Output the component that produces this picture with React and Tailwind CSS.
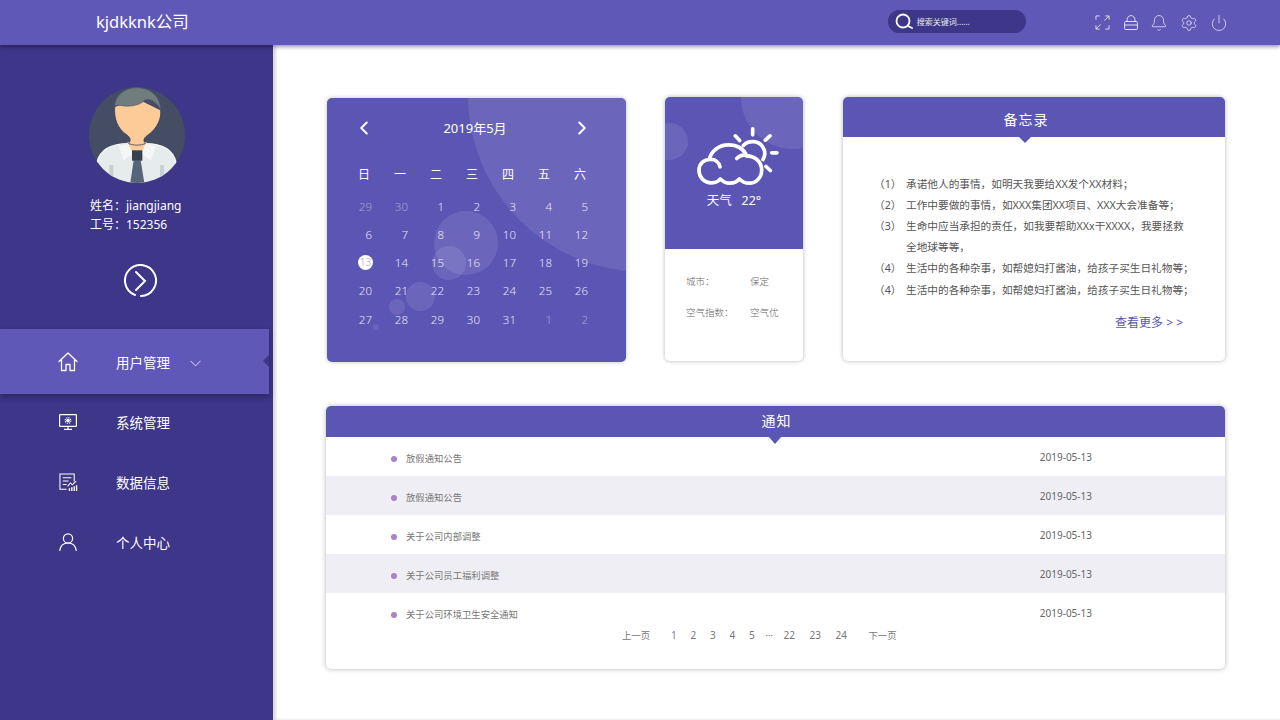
import { Bell, Settings, Power, ChevronDown, ChevronLeft, ChevronRight } from 'lucide-react'

const WEEK = ['日', '一', '二', '三', '四', '五', '六']
const DAYS = [
  29, 30, 1, 2, 3, 4, 5,
  6, 7, 8, 9, 10, 11, 12,
  13, 14, 15, 16, 17, 18, 19,
  20, 21, 22, 23, 24, 25, 26,
  27, 28, 29, 30, 31, 1, 2,
]
const MEMO = [
  ['\uFF081\uFF09', '承诺他人的事情\uFF0C如明天我要给XX发个XX材料\uFF1B'],
  ['\uFF082\uFF09', '工作中要做的事情\uFF0C如XXX集团XX项目\u3001XXX大会准备等\uFF1B'],
  ['\uFF083\uFF09', '生命中应当承担的责任\uFF0C如我要帮助XXx干XXXX\uFF0C我要拯救'],
  ['', '全地球等等\uFF0C'],
  ['\uFF084\uFF09', '生活中的各种杂事\uFF0C如帮媳妇打酱油\uFF0C给孩子买生日礼物等\uFF1B'],
  ['\uFF084\uFF09', '生活中的各种杂事\uFF0C如帮媳妇打酱油\uFF0C给孩子买生日礼物等\uFF1B'],
]
const NOTICES = ['放假通知公告', '放假通知公告', '关于公司内部调整', '关于公司员工福利调整', '关于公司环境卫生安全通知']

function Avatar() {
  return (
    <svg viewBox="11 6 288 288" className="w-24 h-24">
      <defs>
        <clipPath id="av"><circle cx="155" cy="150" r="144" /></clipPath>
      </defs>
      <circle cx="155" cy="150" r="144" fill="#444d63" />
      <g clipPath="url(#av)">
        <path d="M35 232 C45 190 85 176 130 176 L180 176 C225 176 262 190 272 232 L272 310 L35 310 Z" fill="#e6ebec" stroke="#f7f9f9" strokeWidth="4" />
        <path d="M125 172 L185 172 L170 198 L140 198 Z" fill="#fccb97" />
        <path d="M100 182 L130 178 L142 206 L115 226 Z" fill="#f5f7f7" />
        <path d="M212 182 L180 178 L170 206 L196 226 Z" fill="#f5f7f7" />
        <path d="M72 240 h12 v55 h-12 Z M224 240 h12 v55 h-12 Z" fill="#c8d2d4" />
        <path d="M145 226 L166 226 L178 300 L134 300 Z" fill="#566578" />
        <rect x="140" y="196" width="31" height="31" fill="#36404f" />
      </g>
      <path d="M88 65 C86 100 95 130 125 150 C135 158 138 165 130 176 C145 182 165 182 180 176 C172 165 176 158 188 150 C218 128 228 100 226 75 L155 40 Z" fill="#fccb97" stroke="#2c2f5e" strokeWidth="2" />
      <path d="M88 65 C88 30 120 8 155 8 C195 8 226 35 226 75 C215 52 195 38 178 45 C165 62 130 66 110 62 C100 60 92 60 88 65 Z" fill="#717d7c" stroke="#4a5570" strokeWidth="2" />
    </svg>
  )
}

function HomeIcon() {
  return (
    <svg viewBox="0 0 20 20" fill="none" stroke="white" strokeWidth="1.3" strokeLinejoin="round" strokeLinecap="round" className="w-5 h-5">
      <path d="M1 9.5 L10 1 L19 9.5 M3.5 7.5 V18.5 H8 V12.5 H12 V18.5 H16.5 V7.5" />
    </svg>
  )
}

function MonitorIcon() {
  return (
    <svg viewBox="0 0 18 16" fill="none" stroke="white" strokeWidth="1.2" className="w-[18px] h-4">
      <rect x="0.6" y="0.6" width="16.8" height="11.8" rx="0.5" />
      <path d="M9 12.5 v2.5 M5 15.4 h8" />
      <circle cx="9" cy="6.5" r="1.8" fill="white" stroke="none" />
      <circle cx="9" cy="6.5" r="2.8" strokeDasharray="1.2 1" />
    </svg>
  )
}

function ReportIcon() {
  return (
    <svg viewBox="0 0 20 20" fill="none" stroke="white" strokeWidth="1.1" className="w-[19px] h-[19px]">
      <path d="M16 9 V1 H1 V17 H8" />
      <path d="M4 5 H13 M4 8.5 H10 M4 12 H8" />
      <path d="M9 14 L12 10.5 L14 12.5 L18 8.5" />
      <path d="M11 19 v-3 M13.5 19 v-4 M16 19 v-5 M18.5 19 v-6" strokeWidth="1.4" />
    </svg>
  )
}

function UserIcon() {
  return (
    <svg viewBox="0 0 18 18" fill="none" stroke="white" strokeWidth="1.2" strokeLinecap="round" className="w-[18px] h-[18px]">
      <circle cx="9" cy="5.4" r="4.6" />
      <path d="M0.8 17.4 C1.4 12.8 4.6 10 9 10 C13.4 10 16.6 12.8 17.2 17.4" />
    </svg>
  )
}

function ExpandIcon() {
  return (
    <svg viewBox="0 0 16 16" fill="none" stroke="currentColor" strokeWidth="1" className="w-[15px] h-[15px]">
      <path d="M1 5 V1 H5 M11 1 H15 V5 M15 1 L10 6 M1 11 V15 H5 M11 15 H15 V11 M1 15 L6 10" />
    </svg>
  )
}

function LockIcon() {
  return (
    <svg viewBox="0 0 14 15" fill="none" stroke="currentColor" strokeWidth="1" className="w-[14px] h-[15px]">
      <rect x="0.6" y="6.5" width="12.8" height="8" rx="1" />
      <path d="M0.6 10 H13.4 M3 6.5 V5 A4 4.4 0 0 1 11 5 V6.5" />
    </svg>
  )
}

function WeatherIcon() {
  return (
    <svg viewBox="125 105 255 185" fill="none" stroke="white" strokeWidth="11" strokeLinecap="round" strokeLinejoin="round" className="w-[85px] h-[62px]">
      <path d="M172 278 C146 278 134 258 134 240 C134 222 148 208 165 208 C170 182 195 164 222 164 C248 164 268 176 277 197 C302 197 322 215 322 240 C322 262 305 279 285 279 C272 279 262 274 255 266 C248 276 238 279 226 279 C214 279 205 274 198 266 C192 275 184 278 172 278 Z" />
      <path d="M165 208 C182 206 194 216 197 230" />
      <path d="M247 205 C256 196 268 193 279 197" />
      <path d="M267 166 C282 150 312 150 325 170 C334 184 332 198 326 208" />
      <path d="M295 116 V134 M333 150 L347 137 M352 188 H368 M335 229 L348 241 M243 137 L256 151" />
    </svg>
  )
}

function NavRow({ icon, label, active }) {
  if (active) {
    return (
      <div className="relative h-[65px] w-[269px] bg-[#5f58b7] flex items-center text-white shadow-[0_3px_6px_rgba(0,0,0,0.3)]">
        <div className="w-[116px] flex justify-center pl-[20px]">{icon}</div>
        <span className="text-[13.5px] mt-[3px]">{label}</span>
        <ChevronDown size={19} strokeWidth={1} className="ml-[16px] mt-[3px]" />
        <div className="absolute right-0 top-[26px] w-0 h-0 border-y-[6px] border-y-transparent border-r-[6px] border-r-[#3d3689]" />
      </div>
    )
  }
  return (
    <div className="h-[60px] flex items-center text-white">
      <div className="w-[116px] flex justify-center pl-[20px]">{icon}</div>
      <span className="text-[13.5px] mt-[2px]">{label}</span>
    </div>
  )
}

function Sidebar() {
  return (
    <aside className="w-[273px] shrink-0 bg-[#3d3689] flex flex-col text-white">
      <div className="pt-[42px] pl-[89px]">
        <Avatar />
        <div className="mt-[14px] ml-[1px] text-[12px] leading-[18.5px] h-[38px]">
          <p>{'姓名\uFF1Ajiangjiang'}</p>
          <p>{'工号\uFF1A152356'}</p>
        </div>
        <svg viewBox="0 0 34 34" fill="none" stroke="white" strokeWidth="2" strokeLinecap="round" className="w-[34px] h-[34px] mt-[29px] ml-[34px]">
          <path d="M12 31 A15.5 15.5 0 1 1 18 32" />
          <path d="M13 8 L22 17 L13 26" />
        </svg>
      </div>
      <nav className="mt-[31px] flex flex-col">
        <NavRow active label="用户管理" icon={<HomeIcon />} />
        <div className="-mt-[2px]">
          <NavRow label="系统管理" icon={<MonitorIcon />} />
          <NavRow label="数据信息" icon={<ReportIcon />} />
          <NavRow label="个人中心" icon={<UserIcon />} />
        </div>
      </nav>
    </aside>
  )
}

function Calendar() {
  return (
    <div className="relative mt-px w-[299px] h-[264px] rounded-[5px] bg-[#5b55b3] overflow-hidden shadow-[0_0_4px_rgba(0,0,0,0.25)]">
      <div className="absolute left-[141px] top-[-180px] w-[354px] h-[354px] rounded-full bg-white/10" />
      <div className="absolute left-[107px] top-[113px] w-16 h-16 rounded-full bg-white/10" />
      <div className="absolute left-[105px] top-[148px] w-[34px] h-[34px] rounded-full bg-white/10" />
      <div className="absolute left-[79px] top-[184px] w-[29px] h-[29px] rounded-full bg-white/10" />
      <div className="absolute left-[62px] top-[201px] w-4 h-4 rounded-full bg-white/10" />
      <div className="absolute left-[46px] top-[226px] w-1.5 h-1.5 rounded-full bg-white/10" />
      <div className="relative">
        <div className="h-[61px] flex items-center justify-between pl-[27px] pr-[34px] text-white">
          <ChevronLeft size={22} strokeWidth={2.2} className="-ml-px mb-[2px]" />
          <span className="text-[13px] ml-[4px]">2019年5月</span>
          <ChevronRight size={22} strokeWidth={2.2} className="-mr-px mb-[2px]" />
        </div>
        <div className="grid grid-cols-[repeat(7,36px)] pl-[9px] text-white text-[12px] h-[29px] mt-[1px] items-center">
          {WEEK.map(w => <span key={w} className="text-right pr-[2px]">{w}</span>)}
        </div>
        <div className="grid grid-cols-[repeat(7,36px)] auto-rows-[28.3px] items-center pl-[9px] mt-[3px] text-[11.5px] text-white/85 font-light">
          {DAYS.map((d, i) => {
            const dim = i < 2 || i > 32
            if (d === 13) {
              return (
                <span key={i} className="flex justify-end -mr-[1px]">
                  <span className="w-[15px] h-[15px] rounded-full bg-white text-[#a9a5d6] text-[10px] flex items-center justify-center">13</span>
                </span>
              )
            }
            return <span key={i} className={dim ? 'text-right opacity-50' : 'text-right'}>{d}</span>
          })}
        </div>
      </div>
    </div>
  )
}

function Weather() {
  return (
    <div className="w-[138px] h-[264px] rounded-[5px] bg-white overflow-hidden shadow-[0_0_4px_rgba(0,0,0,0.3)]">
      <div className="relative h-[152px] bg-[#5b55b3] overflow-hidden">
        <div className="absolute left-[76px] top-[-52px] w-[104px] h-[104px] rounded-full bg-white/10" />
        <div className="absolute left-[-14px] top-[26px] w-[37px] h-[37px] rounded-full bg-white/10" />
        <div className="relative flex flex-col items-center pt-[28px] text-white">
          <div className="ml-[9px]"><WeatherIcon /></div>
          <p className="text-[12.5px] mt-[5px] whitespace-pre">天气   22°</p>
        </div>
      </div>
      <div className="pl-[21px] pt-[26px] text-[9.5px] text-[#666] font-light">
        <div className="flex h-[31px]"><span className="w-[64px]">{'城市\uFF1A'}</span><span>保定</span></div>
        <div className="flex"><span className="w-[64px]">{'空气指数\uFF1A'}</span><span>空气优</span></div>
      </div>
    </div>
  )
}

function Memo() {
  return (
    <div className="w-[382px] h-[264px] rounded-[5px] bg-white shadow-[0_0_4px_rgba(0,0,0,0.3)]">
      <div className="relative h-[40px] rounded-t-[5px] bg-[#5b55b3] flex items-center justify-center text-white text-[14px] tracking-[1px] pt-[5px] pr-[16px]">
        备忘录
        <div className="absolute left-[175px] top-[39px] w-0 h-0 border-x-[7px] border-x-transparent border-t-[7px] border-t-[#5b55b3]" />
      </div>
      <div className="pl-[31px] pt-[36px] text-[10.67px] text-[#555]">
        {MEMO.map(([n, text], i) => (
          <div key={i} className="flex h-[21.2px] items-center">
            <span className="w-[32px] shrink-0">{n}</span>
            <span className="whitespace-nowrap">{text}</span>
          </div>
        ))}
      </div>
      <p className="text-[12px] text-[#5b55b3] text-right pr-[42px] mt-[14px]">查看更多 &gt; &gt;</p>
    </div>
  )
}

function Notices() {
  return (
    <div className="w-[899px] h-[263px] rounded-[5px] bg-white mt-[44px] shadow-[0_0_5px_rgba(0,0,0,0.3)]">
      <div className="relative h-[31px] rounded-t-[5px] bg-[#5b55b3] flex items-center justify-center text-white text-[14px] tracking-[1px] pb-[3px] pl-[2px]">
        通知
        <div className="absolute left-[442px] top-[30px] w-0 h-0 border-x-[7px] border-x-transparent border-t-[8px] border-t-[#5b55b3]" />
      </div>
      {NOTICES.map((n, i) => (
        <div key={i} className={`flex items-center h-[39px] pt-[2px] pl-[65px] pr-[133px] ${i % 2 ? 'bg-[#efeef4]' : ''}`}>
          <span className="w-1.5 h-1.5 rounded-full bg-[#a784c4] mr-[9px] mt-[2px]" />
          <span className="text-[9.33px] text-[#777] mt-[2px]">{n}</span>
          <span className="ml-auto text-[10px] text-[#666]">2019-05-13</span>
        </div>
      ))}
      <div className="flex items-center h-[9px] mt-[-1px] pl-[296px] text-[9.33px] text-[#777]">
        <span className="w-[49px]">上一页</span>
        <span className="w-[19.5px] text-[#7a74c8] text-[10px]">1</span>
        <span className="w-[19.5px] text-[10px]">2</span>
        <span className="w-[19.5px] text-[10px]">3</span>
        <span className="w-[19.5px] text-[10px]">4</span>
        <span className="w-[16.5px] text-[10px]">5</span>
        <span className="w-[18px]">···</span>
        <span className="w-[26px] text-[10px]">22</span>
        <span className="w-[26px] text-[10px]">23</span>
        <span className="w-[33px] text-[10px]">24</span>
        <span>下一页</span>
      </div>
    </div>
  )
}

export default function App() {
  return (
    <div className="w-[1280px] h-[720px] overflow-hidden flex flex-col bg-white font-['Noto_Sans','Noto_Sans_CJK_SC',sans-serif]">
      <header className="relative z-10 h-[45px] shrink-0 bg-[#5f58b7] flex items-center text-white shadow-[0_2px_4px_rgba(0,0,0,0.35)]">
        <span className="ml-[96px] text-[16.5px]">kjdkknk公司</span>
        <div className="ml-[699px] mb-[2px] w-[138px] h-[23px] rounded-full bg-[#3d3689] flex items-center pl-[7px]">
          <svg viewBox="0 0 18 18" fill="none" stroke="white" strokeWidth="1.8" strokeLinecap="round" className="w-[18px] h-[18px]">
            <circle cx="8" cy="8" r="6.5" />
            <path d="M13 13 L17 15" />
          </svg>
          <span className="ml-[4px] text-[8px] text-white/90">搜索关键词......</span>
        </div>
        <div className="ml-[69px] flex items-center gap-3 text-white/80">
          <ExpandIcon />
          <div className="ml-[2px]"><LockIcon /></div>
          <Bell size={18} strokeWidth={1.1} />
          <Settings size={18} strokeWidth={1.1} />
          <Power size={18} strokeWidth={1.1} />
        </div>
      </header>
      <div className="flex-1 flex min-h-0">
        <Sidebar />
        <main className="flex-1 pt-[52px] pl-[53px] shadow-[inset_3px_0_3px_rgba(0,0,0,0.15)]">
          <div className="flex items-start">
            <div className="ml-px mr-[39px]"><Calendar /></div>
            <Weather />
            <div className="ml-[40px]"><Memo /></div>
          </div>
          <Notices />
        </main>
      </div>
    </div>
  )
}
